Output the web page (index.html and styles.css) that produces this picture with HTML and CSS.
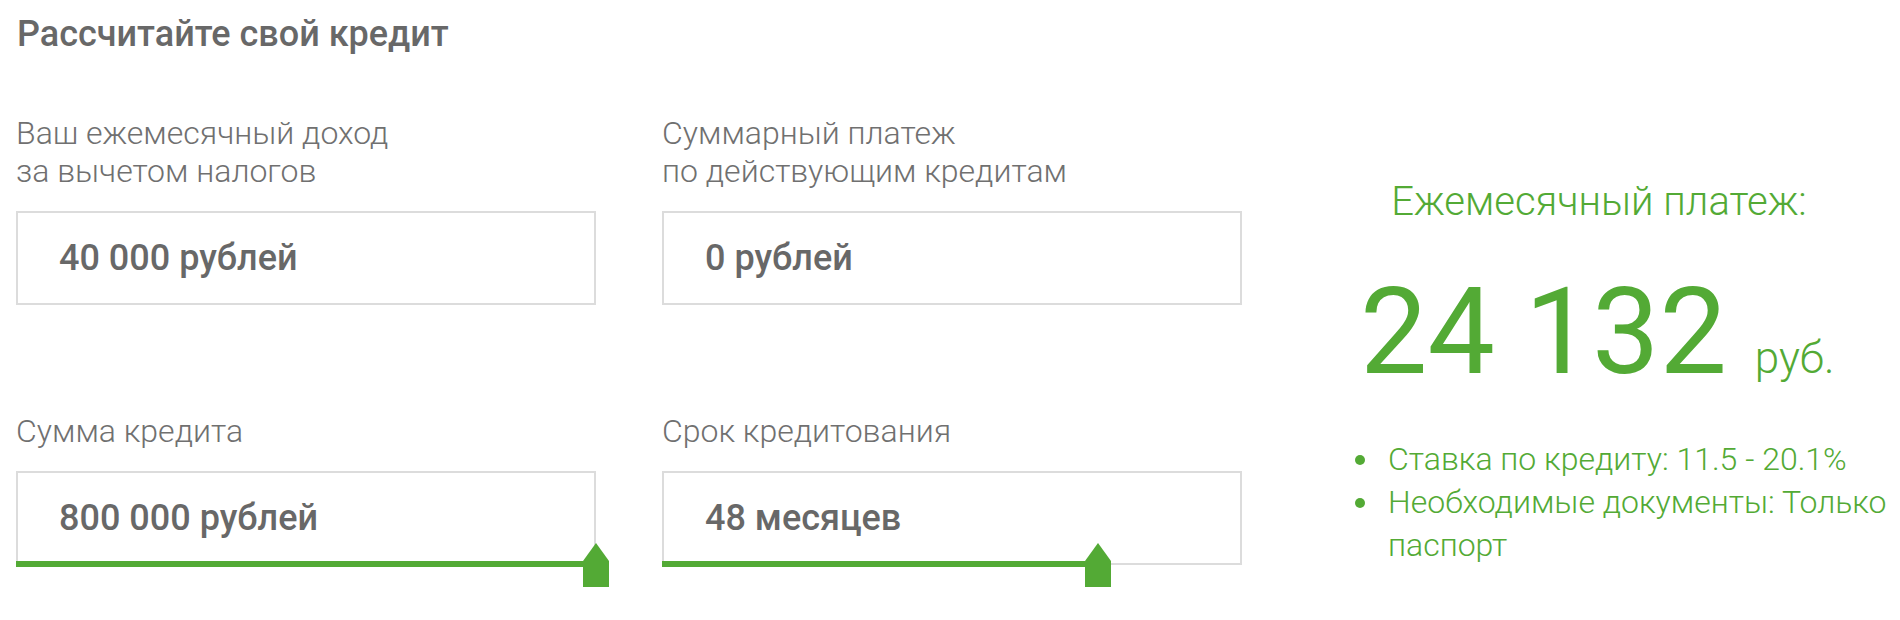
FILE: index.html
```html
<!DOCTYPE html>
<html lang="ru">
<head>
    <meta charset="UTF-8" />
    <title>Рассчитайте свой кредит</title>
    <link rel="stylesheet" href="styles.css">
</head>
<body>

<div class="calculator">
    <div class="calc-form">
        <h2 class="calc-title">Рассчитайте свой кредит</h2>

        <div class="fields">
            <div class="field">
                <label>Ваш ежемесячный доход<br>за вычетом налогов</label>
                <div class="input-box">40 000 рублей</div>
            </div>
            <div class="field">
                <label>Суммарный платеж<br>по действующим кредитам</label>
                <div class="input-box">0 рублей</div>
            </div>

            <div class="field">
                <label>Сумма кредита</label>
                <div class="input-box">
                    800 000 рублей
                    <div class="slider" style="width: 100%;">
                        <svg class="thumb" width="26" height="44" viewBox="0 0 26 44"><path d="M13 0 L26 18 L26 44 L0 44 L0 18 Z" fill="#53aa35"/></svg>
                    </div>
                </div>
            </div>
            <div class="field">
                <label>Срок кредитования</label>
                <div class="input-box">
                    48 месяцев
                    <div class="slider" style="width: 75%;">
                        <svg class="thumb" width="26" height="44" viewBox="0 0 26 44"><path d="M13 0 L26 18 L26 44 L0 44 L0 18 Z" fill="#53aa35"/></svg>
                    </div>
                </div>
            </div>
        </div>
    </div>

    <div class="summary">
        <div class="summary-title">Ежемесячный платеж:</div>
        <div class="summary-sum">24 132 <span class="currency">руб.</span></div>
        <ul class="summary-list">
            <li>Ставка по кредиту: 11.5 - 20.1%</li>
            <li>Необходимые документы: Только паспорт</li>
        </ul>
    </div>
</div>

</body>
</html>
```

FILE: styles.css
```css
body {
    font-family: Roboto, "Noto Sans", sans-serif;
    background: #fff;
    margin: 0;
    min-height: 100vh;
    color: #6b6b6b;
}
.calculator {
    display: flex;
    padding: 14px 0 40px 16px;
}
.calc-form {
    width: 1226px;
}
.calc-title {
    margin: 0 0 60px 1px;
    font-size: 36px;
    font-weight: 500;
    line-height: 40px;
    color: #686868;
}
.fields {
    display: grid;
    grid-template-columns: 580px 580px;
    column-gap: 66px;
    row-gap: 107px;
}
.field label {
    display: block;
    margin-bottom: 21px;
    font-size: 32px;
    font-weight: 300;
    line-height: 38px;
    color: #707070;
}
.input-box {
    position: relative;
    height: 90px;
    padding-left: 41px;
    border: 2px solid #dcdcdc;
    font-size: 36px;
    font-weight: 500;
    line-height: 90px;
    color: #686868;
}
.slider {
    position: absolute;
    left: -2px;
    bottom: -4px;
    height: 6px;
    background: #53aa35;
}
.thumb {
    position: absolute;
    right: -17px;
    top: -18px;
    display: block;
    z-index: 1;
}
.summary {
    margin-left: 113px;
    padding-top: 168px;
    width: 545px;
    color: #53aa35;
}
.summary-title {
    padding-right: 57px;
    font-size: 40px;
    font-weight: 300;
    line-height: 40px;
    text-align: center;
}
.summary-sum {
    margin-top: 50px;
    padding-left: 5px;
    font-size: 120px;
    font-weight: 400;
    line-height: 120px;
}
.currency {
    margin-left: -2px;
    font-size: 44px;
    font-weight: 300;
}
.summary-list {
    list-style: none;
    margin: 20px 0 0;
    padding: 0;
    font-size: 32px;
    font-weight: 300;
    line-height: 43px;
}
.summary-list li {
    display: flex;
    gap: 23px;
}
.summary-list li::before {
    content: "";
    flex: 0 0 10px;
    height: 10px;
    margin-top: 17px;
    border-radius: 50%;
    background: #53aa35;
}
```
